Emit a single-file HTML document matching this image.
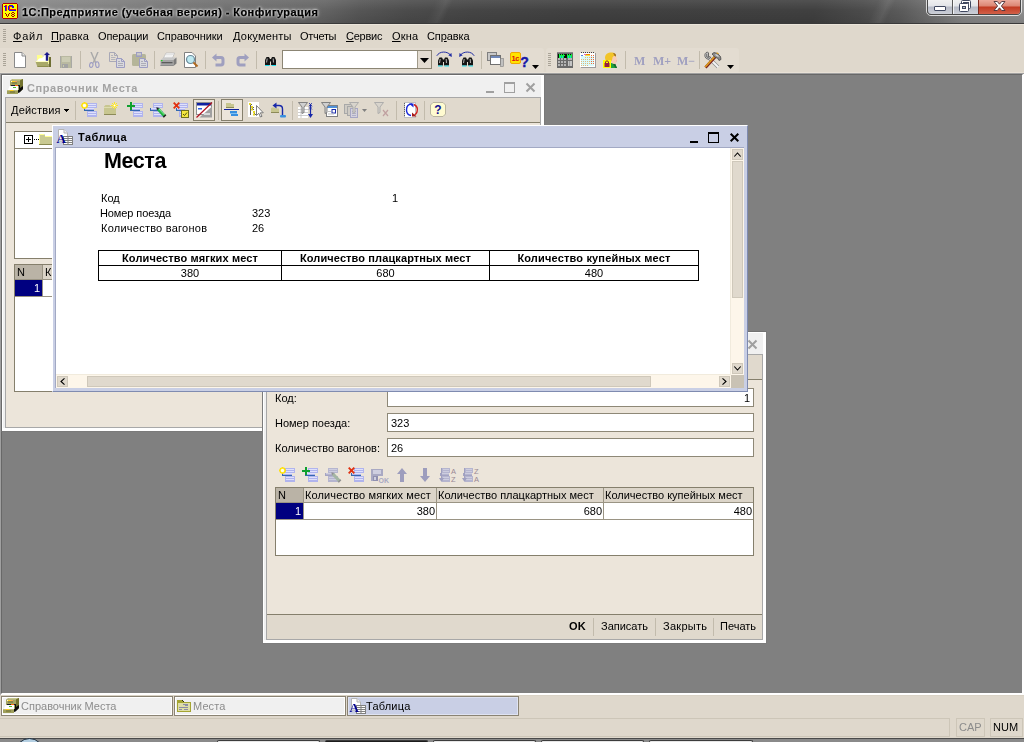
<!DOCTYPE html>
<html lang="ru">
<head>
<meta charset="utf-8">
<title>1C</title>
<style>
*{margin:0;padding:0;box-sizing:border-box;}
html,body{width:1024px;height:742px;overflow:hidden;background:#808080;}
body{font-family:"Liberation Sans",sans-serif;font-size:11px;color:#000;position:relative;}
.a{position:absolute;}
.t{will-change:transform;position:absolute;white-space:nowrap;line-height:13px;height:13px;font-size:11px;}
.b{font-weight:bold;}
u{text-decoration:underline;text-underline-offset:1px;}
svg{position:absolute;overflow:visible;}
/* title bar */
#tb{left:0;top:0;width:1024px;height:24px;
 background:
  linear-gradient(to bottom,rgba(255,255,255,.09) 0,rgba(255,255,255,0) 45%,rgba(0,0,0,.10) 100%),
  linear-gradient(115deg,rgba(255,255,255,0) 796px,rgba(255,255,255,.07) 806px,rgba(255,255,255,0) 812px),
  linear-gradient(115deg,rgba(255,255,255,0) 395px,rgba(255,255,255,.06) 405px,rgba(255,255,255,0) 411px),
  linear-gradient(105deg,#8a8a8a 0,#808080 90px,#727272 190px,#6a6a6a 270px,#646464 315px,#565656 350px,#4c4c4c 395px,#454545 460px,#414141 560px,#404040 790px,#4b4b4b 835px,#5c5c5c 875px,#717171 905px,#868686 935px,#8e8e8e 990px,#888888 1024px);
 border-bottom:1px solid #3a3a3a;}
#tbtxt{left:22px;top:6px;font-size:11px;letter-spacing:.43px;font-weight:bold;line-height:13px;height:13px;color:#000;
 -webkit-text-stroke:.25px #000;text-shadow:0 0 2px #fff,0 0 3px rgba(255,255,255,.85),0 0 5px rgba(255,255,255,.5);}
/* menu + toolbar zone */
#mz{left:0;top:24px;width:1024px;height:49px;background:#dfd8cc;border-top:1px solid #ebe5da;}
.tbar{background:#e3dcd1;border-radius:0 3px 3px 0;}
.grip{width:3px;background:repeating-linear-gradient(to bottom,#a9a397 0,#a9a397 1px,transparent 1px,transparent 2px);}
.vsep{width:1px;background:#c2bbac;}
/* generic window */
.win{position:absolute;}
.sbtn{background:#e0d9cd;border:1px solid #cfc8ba;}
</style>
</head>
<body>
<!-- TITLE BAR -->
<div id="tb" class="a"></div>
<div id="tbtxt" class="t">1С:Предприятие (учебная версия) - Конфигурация</div>

<!-- logo -->
<svg style="left:2px;top:3px" width="16" height="16" viewBox="0 0 16 16" shape-rendering="crispEdges"><rect x="1" y="0" width="14" height="16" fill="#b00000"/><rect x="0" y="1" width="16" height="14" fill="#b00000"/><rect x="1" y="1" width="14" height="14" fill="#ffff00"/><rect x="2" y="3" width="2" height="1" fill="#1010f0"/><rect x="3" y="4" width="1" height="4" fill="#1010f0"/><rect x="7" y="2" width="4" height="1" fill="#1010f0"/><rect x="6" y="3" width="1" height="4" fill="#1010f0"/><rect x="10" y="3" width="2" height="2" fill="#1010f0"/><rect x="7" y="7" width="7" height="1" fill="#1010f0"/><rect x="3" y="2" width="2" height="1" fill="#f01010"/><rect x="4" y="3" width="1" height="5" fill="#f01010"/><rect x="7" y="3" width="3" height="1" fill="#f01010"/><rect x="7" y="4" width="1" height="2" fill="#f01010"/><rect x="7" y="6" width="7" height="1" fill="#f01010"/><rect x="3" y="10" width="1" height="1" fill="#a00000"/><rect x="7" y="10" width="1" height="1" fill="#a00000"/><rect x="4" y="11" width="1" height="1" fill="#a00000"/><rect x="6" y="11" width="1" height="1" fill="#a00000"/><rect x="4" y="12" width="1" height="1" fill="#a00000"/><rect x="6" y="12" width="1" height="1" fill="#a00000"/><rect x="5" y="13" width="1" height="1" fill="#a00000"/><rect x="10" y="9" width="2" height="1" fill="#a00000"/><rect x="9" y="10" width="1" height="1" fill="#a00000"/><rect x="12" y="10" width="1" height="1" fill="#a00000"/><rect x="10" y="11" width="2" height="1" fill="#a00000"/><rect x="9" y="12" width="1" height="1" fill="#a00000"/><rect x="12" y="12" width="1" height="1" fill="#a00000"/><rect x="10" y="13" width="2" height="1" fill="#a00000"/></svg>
<!-- caption buttons -->
<div class="a" style="left:926px;top:-2px;width:96px;height:18px;border:1px solid rgba(255,255,255,.75);border-radius:0 0 5px 5px"></div>
<div class="a" style="left:927px;top:-2px;width:94px;height:17px;border:1px solid #484848;border-radius:0 0 4px 4px;overflow:hidden;background:linear-gradient(to bottom,#f2f2f2 0,#e2e4e8 7px,#b6bac6 8px,#cfd2da 16px)">
 <div class="a" style="left:50px;top:0;width:44px;height:17px;background:linear-gradient(to bottom,#eeb0a2 0,#dc8674 7px,#c23a22 8px,#d4664e 16px);border-left:1px solid #7a2a20"></div>
 <div class="a" style="left:24px;top:0;width:1px;height:17px;background:#585858"></div>
 <div class="a" style="left:25px;top:0;width:1px;height:17px;background:rgba(255,255,255,.7)"></div>
</div>
<div class="a" style="left:934px;top:6px;width:12px;height:5px;background:#fff;border:1px solid #404860;border-radius:1px"></div>
<svg style="left:958px;top:0" width="14" height="12" viewBox="0 0 14 12"><rect x="3.500" y=".5" width="9" height="8" rx="1" fill="#fff" stroke="#404860"/><rect x="5.500" y="2.500" width="5" height="4" fill="#d8dae0" stroke="#404860"/><rect x="1.500" y="3.500" width="9" height="8" rx="1" fill="#fff" stroke="#404860"/><rect x="4.500" y="6.500" width="3" height="2" fill="#c0c4cc" stroke="#404860"/></svg>
<svg style="left:993px;top:1px" width="13" height="10" viewBox="0 0 13 10"><path d="M1 .5H4.300L6.500 3.200L8.700 .5H12L8.400 5L12 9.500H8.700L6.500 6.800L4.300 9.500H1L4.600 5Z" fill="#fff" stroke="#4a3038" stroke-width=".9"/></svg>

<!-- MENU ZONE -->
<div id="mz" class="a"></div>
<div class="a grip" style="left:3px;top:29px;height:13px"></div>
<div class="t" style="left:13px;top:30px;letter-spacing:.8px"><u>Ф</u>айл</div>
<div class="t" style="left:51px;top:30px;letter-spacing:.15px"><u>П</u>равка</div>
<div class="t" style="left:98px;top:30px;letter-spacing:-.14px">Операции</div>
<div class="t" style="left:157px;top:30px;letter-spacing:-.11px">Справочники</div>
<div class="t" style="left:233px;top:30px;letter-spacing:.22px">Док<u>у</u>менты</div>
<div class="t" style="left:300px;top:30px;letter-spacing:-.3px">Отчеты</div>
<div class="t" style="left:346px;top:30px;letter-spacing:-.23px"><u>С</u>ервис</div>
<div class="t" style="left:392px;top:30px;letter-spacing:.15px"><u>О</u>кна</div>
<div class="t" style="left:427px;top:30px;letter-spacing:-.1px">Сп<u>р</u>авка</div>

<!-- MAIN TOOLBAR 1 -->
<div class="a tbar" style="left:0;top:48px;width:544px;height:25px"></div>
<div class="a grip" style="left:3px;top:53px;height:13px"></div>
<!-- new -->
<svg style="left:13px;top:52px" width="14" height="17" viewBox="0 0 14 17"><path d="M1.5 .5H9L12.5 4V15.5H1.5Z" fill="#fff" stroke="#8a8a8a"/><path d="M9 .5V4H12.5" fill="#e8e8e8" stroke="#8a8a8a"/></svg>
<!-- open -->
<svg style="left:35px;top:52px" width="17" height="16" viewBox="0 0 17 16"><path d="M2 3H6.500L8 4.500V9H2Z" fill="#ffff8c"/><path d="M2 9L4 6.500L7 6L10 3.500L12 4V9Z" fill="#fff"/><path d="M13 5H14V12H13Z" fill="#ffffa8"/><path d="M14 5H16V15H13.500V12H14Z" fill="#6e6e32"/><path d="M.3 9H13L13.500 15H2.500Z" fill="#a8a868"/><path d="M.3 9H13V10H.6Z" fill="#ffffc4"/><path d="M2.500 14H13.500V15H2.500Z" fill="#8c8c4c"/><path d="M12 0L15 3H13.200V8.700H10.800V3H9Z" fill="#1a1a8c"/></svg>
<!-- save disabled -->
<svg style="left:60px;top:56px" width="12" height="12" viewBox="0 0 12 12" shape-rendering="crispEdges"><rect x="0" y="0" width="12" height="12" fill="#a9a9a5"/><rect x="1" y="0" width="10" height="12" fill="#b9b9a1"/><rect x="2" y="1" width="8" height="5" fill="#cbcbb3"/><rect x="2" y="8" width="6" height="4" fill="#a3a3a3"/><rect x="3" y="9" width="1" height="2" fill="#cbcbab"/></svg>
<div class="a vsep" style="left:80px;top:51px;height:18px"></div>
<!-- cut -->
<svg style="left:89px;top:52px" width="11" height="16" viewBox="0 0 11 16"><path d="M1.300 0L2.800 0L7.300 10.500L6 11Z" fill="#a9a9a9"/><path d="M9.700 0L8.200 0L3.700 10.500L5 11Z" fill="#a9a9a9"/><ellipse cx="2.300" cy="13" rx="1.700" ry="2.400" fill="none" stroke="#9d9dc3" stroke-width="1.100" transform="rotate(12 2.300 13)"/><ellipse cx="8.300" cy="12.600" rx="1.700" ry="2.900" fill="none" stroke="#9d9dc3" stroke-width="1.100" transform="rotate(-8 8.300 12.600)"/></svg>
<!-- copy -->
<svg style="left:109px;top:52px" width="17" height="17" viewBox="0 0 17 17"><path d="M.5 .5H5.500L8.500 3.500V9.500H.5Z" fill="#e3dcd1" stroke="#a9a9b7"/><path d="M5.500 .5V3.500H8.500" fill="none" stroke="#a9a9b7"/><path d="M2 3.500H4M2 5.500H6.500M2 7.500H6.500" stroke="#b4b4bc"/><path d="M7.5 6.5H12.5L15.5 9.5V15.5H7.5Z" fill="#d9d9dd" stroke="#9d9dc3"/><path d="M12.5 6.5V9.5H15.5" fill="none" stroke="#9d9dc3"/><path d="M9 9.5H11M9 11.5H14M9 13.5H14" stroke="#acacb8"/></svg>
<!-- paste -->
<svg style="left:132px;top:52px" width="17" height="17" viewBox="0 0 17 17"><rect x="0" y="2" width="14" height="12" rx="1.500" fill="#b5b599"/><rect x="4.500" y=".5" width="5" height="4" fill="#c9c9c9" stroke="#9d9dc3"/><rect x="5" y="3" width="4" height="1" fill="#b0b0b8"/><path d="M7.5 6.5H12.5L15.5 9.5V15.5H7.5Z" fill="#d9d9dd" stroke="#9d9dc3"/><path d="M12.5 6.5V9.5H15.5" fill="none" stroke="#9d9dc3"/><path d="M9 9.5H11M9 11.5H14M9 13.5H14" stroke="#acacb8"/></svg>
<div class="a vsep" style="left:154px;top:51px;height:18px"></div>
<!-- print -->
<svg style="left:160px;top:52px" width="17" height="16" viewBox="0 0 17 16"><path d="M3.500 6L6 1H14.500L12.500 6Z" fill="#fff" stroke="#b4b4b4" stroke-width=".7"/><path d="M6 2.500H13M5.500 4H12.500" stroke="#d8d8d8" stroke-width=".7"/><path d="M.5 8L3.500 5.500H14L16.500 5.500L13.500 8Z" fill="#c8c8c8"/><path d="M.5 8H13.500V14H.5Z" fill="#a4a4a4"/><path d="M13.500 8L16.500 5.500V11.500L13.500 14Z" fill="#7c7c7c"/><rect x="1.500" y="10" width="11" height="1.300" fill="#5c5c5c"/><rect x=".5" y="13" width="13" height="1" fill="#8c8c8c"/><rect x="1" y="8" width="1.500" height="1.200" fill="#20d020"/></svg>
<!-- preview -->
<svg style="left:184px;top:52px" width="15" height="17" viewBox="0 0 15 17"><path d="M.5 .5H8L11.500 4V15.500H.5Z" fill="#fff" stroke="#808080"/><circle cx="6.500" cy="7.500" r="4" fill="#bfeaf2" stroke="#6a8a9a" stroke-width="1.200"/><path d="M9.500 10.500L13.500 14.500" stroke="#b06a20" stroke-width="2"/></svg>
<div class="a vsep" style="left:205px;top:51px;height:18px"></div>
<!-- undo -->
<svg style="left:212px;top:53px" width="13" height="14" viewBox="0 0 13 14"><path d="M0 4.500L4.500 .5V3H9C11.500 3 12.500 4.500 12.500 6.500V10C12.500 12 11.500 13.500 9 13.500H3.500V10.500H8.500C9.300 10.500 9.500 10 9.500 9.500V7C9.500 6.300 9.200 6 8.500 6H4.500V8.500Z" fill="#9f9fbf"/></svg>
<!-- redo -->
<svg style="left:236px;top:53px" width="13" height="14" viewBox="0 0 13 14"><g transform="translate(13,0) scale(-1,1)"><path d="M0 4.500L4.500 .5V3H9C11.500 3 12.500 4.500 12.500 6.500V10C12.500 12 11.500 13.500 9 13.500H3.500V10.500H8.500C9.300 10.500 9.500 10 9.500 9.500V7C9.500 6.300 9.200 6 8.500 6H4.500V8.500Z" fill="#9f9fbf"/></g></svg>
<div class="a vsep" style="left:256px;top:51px;height:18px"></div>
<!-- binoculars -->
<svg style="left:265px;top:57px" width="11" height="9" viewBox="0 0 11 9"><path d="M1.500 0H4L5 2V8H0V3Z" fill="#151515"/><path d="M9.500 0H7L6 2V8H11V3Z" fill="#151515"/><rect x="4.500" y="2" width="2" height="2.500" fill="#151515"/><path d="M2.200 1.500L1.500 5.500" stroke="#a8a8a8" stroke-width="1.100"/><path d="M8.200 1.500L8.500 5.500" stroke="#a8a8a8" stroke-width="1.100"/><rect x="0" y="8" width="4.500" height="1" fill="#20dcec"/><rect x="6.500" y="8" width="4.500" height="1" fill="#20dcec"/></svg>
<!-- combo -->
<div class="a" style="left:282px;top:50px;width:150px;height:19px;background:#fff;border:1px solid #8b8574"></div>
<div class="a" style="left:417px;top:51px;width:14px;height:17px;background:#e3dcd1;border-left:1px solid #a09a8a"></div>
<svg style="left:420px;top:58px" width="9" height="5" viewBox="0 0 9 5"><path d="M0 0H9L4.500 5Z" fill="#000"/></svg>
<!-- find next -->
<svg style="left:436px;top:51px" width="17" height="16" viewBox="0 0 17 16"><path d="M.8 4.800C3.500 0 11 0 14.300 3.800" fill="none" stroke="#2430a4" stroke-width="1"/><path d="M15.800 6L15.500 2L12.300 4.300Z" fill="#2430a4"/><g transform="translate(2,6.500)"><path d="M1.500 0H4L5 2V8H0V3Z" fill="#151515"/><path d="M9.500 0H7L6 2V8H11V3Z" fill="#151515"/><rect x="4.500" y="2" width="2" height="2.500" fill="#151515"/><path d="M2.200 1.500L1.500 5.500" stroke="#a8a8a8" stroke-width="1.100"/><path d="M8.200 1.500L8.500 5.500" stroke="#a8a8a8" stroke-width="1.100"/><rect x="0" y="8" width="4.500" height="1" fill="#20dcec"/><rect x="6.500" y="8" width="4.500" height="1" fill="#20dcec"/></g></svg>
<!-- find prev -->
<svg style="left:459px;top:51px" width="17" height="16" viewBox="0 0 17 16"><path d="M15.200 4.800C12.500 0 5 0 1.700 3.800" fill="none" stroke="#2430a4" stroke-width="1"/><path d="M.2 6L.5 2L3.700 4.300Z" fill="#2430a4"/><g transform="translate(3,6.500)"><path d="M1.500 0H4L5 2V8H0V3Z" fill="#151515"/><path d="M9.500 0H7L6 2V8H11V3Z" fill="#151515"/><rect x="4.500" y="2" width="2" height="2.500" fill="#151515"/><path d="M2.200 1.500L1.500 5.500" stroke="#a8a8a8" stroke-width="1.100"/><path d="M8.200 1.500L8.500 5.500" stroke="#a8a8a8" stroke-width="1.100"/><rect x="0" y="8" width="4.500" height="1" fill="#20dcec"/><rect x="6.500" y="8" width="4.500" height="1" fill="#20dcec"/></g></svg>
<div class="a vsep" style="left:481px;top:51px;height:18px"></div>
<!-- windows -->
<svg style="left:487px;top:52px" width="17" height="15" viewBox="0 0 17 15"><rect x=".5" y=".5" width="9" height="8" fill="#c8c8c8" stroke="#808080"/><rect x="3.500" y="3.500" width="10" height="9" fill="#fff" stroke="#707070"/><rect x="4" y="4" width="9" height="2" fill="#7088b8"/><rect x="13.500" y="6.500" width="3" height="8" fill="#c0c0c0" stroke="#808080" stroke-width=".6"/></svg>
<!-- 1c help -->
<svg style="left:510px;top:52px" width="18" height="16" viewBox="0 0 18 16"><rect x=".5" y=".5" width="10" height="11" rx="1.500" fill="#ffe400" stroke="#f0a800"/><text x="1.500" y="8.500" font-family="Liberation Sans" font-size="7.500" font-weight="bold" fill="#e01010" letter-spacing="-.3">1c</text><text x="10.300" y="15.300" font-family="Liberation Sans" font-size="14" font-weight="bold" fill="#1818a8" stroke="#1818a8" stroke-width=".4">?</text></svg>
<svg style="left:532px;top:65px" width="7" height="4" viewBox="0 0 7 4"><path d="M0 0H7L3.500 4Z" fill="#000"/></svg>

<!-- MAIN TOOLBAR 2 -->
<div class="a tbar" style="left:546px;top:48px;width:193px;height:25px;border-radius:3px"></div>
<div class="a grip" style="left:548px;top:53px;height:13px"></div>
<!-- calculator -->
<svg style="left:557px;top:52px" width="16" height="16" viewBox="0 0 16 16" shape-rendering="crispEdges"><rect x="0" y="0" width="16" height="16" fill="#6a6a6a"/><rect x="0" y="0" width="16" height="1" fill="#8a8a8a"/><rect x="1" y="2" width="14" height="4" fill="#081008"/><rect x="2" y="2" width="1" height="4" fill="#10f040"/><rect x="4" y="2" width="1" height="4" fill="#10f040"/><rect x="6" y="2" width="1" height="4" fill="#10f040"/><rect x="10" y="2" width="1" height="4" fill="#10f040"/><rect x="12" y="2" width="1" height="4" fill="#10f040"/><rect x="14" y="2" width="1" height="4" fill="#10f040"/><rect x="3" y="4" width="1" height="2" fill="#10d8d0"/><rect x="5" y="4" width="1" height="2" fill="#10d8d0"/><rect x="11" y="4" width="1" height="2" fill="#10d8d0"/><rect x="13" y="4" width="1" height="2" fill="#10d8d0"/><rect x="2" y="3" width="6" height="1" fill="#10f040"/><rect x="10" y="3" width="5" height="1" fill="#10f040"/><rect x="1" y="6" width="2" height="2" fill="#b4b4b4"/><rect x="4" y="6" width="2" height="2" fill="#b4b4b4"/><rect x="7" y="6" width="2" height="2" fill="#b4b4b4"/><rect x="1" y="9" width="2" height="2" fill="#b4b4b4"/><rect x="4" y="9" width="2" height="2" fill="#b4b4b4"/><rect x="7" y="9" width="2" height="2" fill="#b4b4b4"/><rect x="1" y="12" width="2" height="2" fill="#b4b4b4"/><rect x="4" y="12" width="2" height="2" fill="#b4b4b4"/><rect x="7" y="12" width="2" height="2" fill="#b4b4b4"/><rect x="11" y="6" width="4" height="2" fill="#b4b4b4"/><rect x="11" y="9" width="4" height="5" fill="#c4c4c4"/><rect x="12" y="9" width="1" height="5" fill="#a0a0a0"/></svg>
<!-- calendar -->
<svg style="left:580px;top:52px" width="16" height="16" viewBox="0 0 16 16" shape-rendering="crispEdges"><rect x="1" y="1" width="15" height="15" fill="#9c9c9c"/><rect x="0" y="1" width="15" height="14" fill="#fff"/><rect x="1" y="4" width="13" height="10" fill="#dafafa"/><rect x="0" y="0" width="15" height="1" fill="#e3dcd1"/><rect x="1" y="0" width="1" height="1" fill="#404040"/><rect x="3" y="0" width="1" height="1" fill="#404040"/><rect x="5" y="0" width="1" height="1" fill="#404040"/><rect x="7" y="0" width="1" height="1" fill="#404040"/><rect x="9" y="0" width="1" height="1" fill="#404040"/><rect x="11" y="0" width="1" height="1" fill="#404040"/><rect x="13" y="0" width="1" height="1" fill="#404040"/><rect x="4" y="2" width="2" height="1" fill="#e060c0"/><rect x="6" y="2" width="4" height="1" fill="#f08000"/><rect x="5" y="3" width="5" height="1" fill="#f8e040"/><rect x="1" y="3" width="2" height="1" fill="#6080e0"/><rect x="11" y="3" width="1" height="1" fill="#f06a38"/><rect x="13" y="3" width="1" height="1" fill="#f06a38"/><rect x="5" y="5" width="1" height="1" fill="#e0b878"/><rect x="7" y="5" width="1" height="1" fill="#e0b878"/><rect x="9" y="5" width="1" height="1" fill="#e0b878"/><rect x="11" y="5" width="1" height="1" fill="#f06a38"/><rect x="13" y="5" width="1" height="1" fill="#f06a38"/><rect x="1" y="7" width="1" height="1" fill="#e0b878"/><rect x="3" y="7" width="1" height="1" fill="#e0b878"/><rect x="5" y="7" width="1" height="1" fill="#e0b878"/><rect x="7" y="7" width="1" height="1" fill="#e0b878"/><rect x="9" y="7" width="1" height="1" fill="#e0b878"/><rect x="11" y="7" width="1" height="1" fill="#f06a38"/><rect x="13" y="7" width="1" height="1" fill="#f06a38"/><rect x="1" y="9" width="1" height="1" fill="#e0b878"/><rect x="3" y="9" width="1" height="1" fill="#e0b878"/><rect x="5" y="9" width="1" height="1" fill="#e0b878"/><rect x="7" y="9" width="1" height="1" fill="#e0b878"/><rect x="9" y="9" width="1" height="1" fill="#e0b878"/><rect x="11" y="9" width="1" height="1" fill="#f06a38"/><rect x="13" y="9" width="1" height="1" fill="#f06a38"/><rect x="1" y="11" width="1" height="1" fill="#e0b878"/><rect x="3" y="11" width="1" height="1" fill="#e0b878"/><rect x="5" y="11" width="1" height="1" fill="#e0b878"/><rect x="7" y="11" width="1" height="1" fill="#e0b878"/><rect x="9" y="11" width="1" height="1" fill="#e0b878"/><rect x="11" y="11" width="1" height="1" fill="#f06a38"/><rect x="13" y="11" width="1" height="1" fill="#f06a38"/><rect x="1" y="13" width="1" height="1" fill="#e0b878"/><rect x="3" y="13" width="1" height="1" fill="#e0b878"/><rect x="5" y="13" width="1" height="1" fill="#e0b878"/><rect x="7" y="13" width="1" height="1" fill="#e0b878"/></svg>
<!-- user lock -->
<svg style="left:602px;top:52px" width="16" height="17" viewBox="0 0 16 17"><path d="M9 11L8 16H15L13 11.500Z" fill="#20a040"/><path d="M11 12L13.500 16H15L13 11.500Z" fill="#186830"/><path d="M8 4C10 2 14 3 14.500 5.500L15 8.500L14 9L14 11.500C12 12.500 10 11.500 9 10Z" fill="#f8ccb4"/><path d="M14 8.500L15 8.500L14.300 10.500Z" fill="#f0a0a0"/><path d="M3 6C3 1.500 7 0 10.500 .5C13 1 14.500 2.500 14 4.500C12.500 3.500 11 4 10.500 5.500C10.500 8 9 10 8 10.500L4 10Z" fill="#f2c428"/><path d="M11 1C13 1 14.500 2.500 14 4.500L12.500 3.800Z" fill="#a07028"/><rect x="1" y="8" width="8" height="8" fill="#ffff00"/><rect x="2.500" y="11" width="5" height="4" fill="#962040"/><path d="M3.500 11V10C3.500 8.600 6.500 8.600 6.500 10V11" fill="none" stroke="#962040" stroke-width="1"/></svg>
<div class="a vsep" style="left:625px;top:51px;height:18px"></div>
<div class="t b" style="left:634px;top:55px;font-family:'Liberation Serif',serif;font-size:12px;color:#9f9fc0">М</div>
<div class="t b" style="left:653px;top:55px;font-family:'Liberation Serif',serif;font-size:12px;color:#9f9fc0">М+</div>
<div class="t b" style="left:677px;top:55px;font-family:'Liberation Serif',serif;font-size:12px;color:#9f9fc0">М−</div>
<div class="a vsep" style="left:699px;top:51px;height:18px"></div>
<!-- tools -->
<svg style="left:704px;top:52px" width="18" height="17" viewBox="0 0 18 17"><path d="M5 6L14 15" stroke="#8c8c8c" stroke-width="3.400"/><path d="M5 6L14.300 15.300" stroke="#f4f4f4" stroke-width="2"/><path d="M3.500 0C1.500 .5 .5 2 1 4.500C1.500 6.500 3.500 7.500 5.500 7L6.500 5L4.500 4.500V1Z" fill="#d4d4d4" stroke="#484848" stroke-width=".8"/><path d="M2.800 1.500V5.200H5" fill="none" stroke="#505050" stroke-width=".9"/><path d="M1.500 15.500L11.500 4.500" stroke="#7a2020" stroke-width="2.800"/><path d="M1.200 15L11.200 4" stroke="#dc9a1c" stroke-width="1.800"/><path d="M8 2L10 .5L13.500 1.500L16.500 4.500L17 7.500L15 8.500L13.500 6L11 5.500L9.500 3.500Z" fill="#8a8a8a" stroke="#3c3c3c" stroke-width=".7"/><path d="M11.500 2.500L14.500 4.500" stroke="#dcdcdc" stroke-width="1.200"/><path d="M12.500 0.800L14.500 1.800" stroke="#dc9a1c" stroke-width="1.200"/></svg>
<svg style="left:727px;top:65px" width="7" height="4" viewBox="0 0 7 4"><path d="M0 0H7L3.500 4Z" fill="#000"/></svg>

<!-- MDI client edge -->
<div class="a" style="left:0;top:73px;width:1024px;height:622px;background:#808080;border:2px solid #fff;border-top-color:#686868;border-left-color:#686868"></div>
<div class="a" style="left:0;top:73px;width:1024px;height:1px;background:#a0a0a0"></div>
<div class="a" style="left:0;top:73px;width:1px;height:621px;background:#a0a0a0"></div>
<div class="a" style="left:0;top:72px;width:1024px;height:1px;background:#e8e1d6"></div>

<!-- WINDOWS placeholder -->
<!--W1 Справочник Места : outer x1..544 y74..431-->
<div class="a" style="left:1px;top:74px;width:544px;height:358px;background:#f0f0f0;border:1px solid #6a6a6a;border-right-color:#7a7a7a;border-bottom-color:#7a7a7a"></div>
<div class="a" style="left:2px;top:75px;width:542px;height:356px;border:1px solid #fff;border-right-width:3px;border-bottom-width:3px"></div>
<!-- title -->
<div class="t b" style="left:27px;top:82px;letter-spacing:.59px;color:#a3a3a3">Справочник Места</div>
<div class="a" style="left:486px;top:91px;width:8px;height:2px;background:#a0a0a0"></div>
<div class="a" style="left:504px;top:82px;width:11px;height:11px;border:1px solid #a0a0a0;border-top-width:2px"></div>
<svg style="left:526px;top:83px" width="9" height="9" viewBox="0 0 9 9"><path d="M.5 .5L8.500 8.500M8.500 .5L.5 8.500" stroke="#a0a0a0" stroke-width="2"/></svg>
<svg style="left:7px;top:78px" width="17" height="17" viewBox="0 0 17 17"><path d="M3 2.500L6 1H16V11L13 13.500V2.500Z" fill="#8c8c48"/><path d="M3 2.500L6 1H16L13 2.500Z" fill="#c6c68c"/><rect x="3" y="2.500" width="10" height="10" fill="#a4a462"/><path d="M13 2.500L16 1V11L13 13.500Z" fill="#72722e"/><rect x="4" y="3" width="6" height="1" fill="#ffd020"/><rect x="4" y="3" width="1" height="1" fill="#fffbd0"/><rect x="8" y="3" width="2" height="1" fill="#f0a060"/><rect x="5" y="4.500" width="5" height="1" fill="#6c6c30"/><rect x="4" y="7" width="9" height="1" fill="#181828"/><rect x="8" y="7" width="3" height="1" fill="#ff6a00"/><path d="M12 8H13V10L16 8V11L12.500 14.500L11 15V12H12Z" fill="#0c0c0c"/><path d="M2.500 8H11V12H1Z" fill="#fff"/><rect x="6" y="9" width="3" height="1" fill="#50c030"/><rect x="0" y="12" width="11" height="4" fill="#a0a05c"/><rect x="0" y="12" width="11" height="1" fill="#bcbc80"/><rect x="2.500" y="12" width="4" height="1" fill="#ffd020"/><rect x="3" y="13.500" width="5" height="1" fill="#6c6c30"/></svg>
<!-- content -->
<div class="a" style="left:5px;top:97px;width:536px;height:331px;background:#ece5da;border:1px solid #a8a8a8"></div>
<!-- cmd bar -->
<div class="a" style="left:6px;top:98px;width:534px;height:25px;background:#e0d9cd;border-bottom:1px solid #857f6c"></div>
<div class="t" style="left:11px;top:104px;letter-spacing:.18px">Действия</div>
<svg style="left:64px;top:109px" width="5" height="3" viewBox="0 0 5 3" shape-rendering="crispEdges"><rect x="0" y="0" width="5" height="1"/><rect x="1" y="1" width="3" height="1"/><rect x="2" y="2" width="1" height="1"/></svg>
<div class="a vsep" style="left:75px;top:101px;height:19px"></div>
<svg style="left:81px;top:102px" width="17" height="16" viewBox="0 0 17 16" shape-rendering="crispEdges"><rect x="6" y="1" width="10" height="5" fill="#b0b4ee"/><rect x="7" y="2" width="8" height="1" fill="#dfe1fb"/><rect x="7" y="4" width="8" height="1" fill="#dfe1fb"/><rect x="3" y="6" width="10" height="3" fill="#b0b4ee"/><rect x="4" y="6" width="9" height="1" fill="#dfe1fb"/><rect x="3" y="8" width="10" height="1" fill="#3468b0"/><rect x="3" y="6" width="1" height="3" fill="#3468b0"/><rect x="6" y="9" width="10" height="6" fill="#b0b4ee"/><rect x="7" y="10" width="8" height="1" fill="#dfe1fb"/><rect x="7" y="12" width="8" height="1" fill="#dfe1fb"/><g shape-rendering="auto"><circle cx="3.500" cy="3.500" r="2.600" fill="#fffbd0" stroke="#ffe000" stroke-width="1.400"/><path d="M3.500 0V7M0 3.500H7M1 1L6 6M6 1L1 6" stroke="#ffe000" stroke-width=".8"/><circle cx="3.500" cy="3.500" r="1.700" fill="#fffef0"/></g></svg>
<svg style="left:104px;top:102px" width="16" height="14" viewBox="0 0 16 14"><path d="M0 4.500L1.500 3H5.500L7 4.500H12V13H0Z" fill="#c8c690"/><path d="M0 12.500H12" stroke="#8c8a58"/><path d="M0 5.500H12" stroke="#deddb0"/><path d="M10.500 0V7M7 3.500H14M8 1L13 6M13 1L8 6" stroke="#ffe820" stroke-width="1"/><circle cx="10.500" cy="3.500" r="1" fill="#fff"/></svg>
<svg style="left:127px;top:102px" width="17" height="16" viewBox="0 0 17 16" shape-rendering="crispEdges"><rect x="6" y="1" width="10" height="5" fill="#b0b4ee"/><rect x="7" y="2" width="8" height="1" fill="#dfe1fb"/><rect x="7" y="4" width="8" height="1" fill="#dfe1fb"/><rect x="3" y="6" width="10" height="3" fill="#b0b4ee"/><rect x="4" y="6" width="9" height="1" fill="#dfe1fb"/><rect x="3" y="8" width="10" height="1" fill="#3468b0"/><rect x="3" y="6" width="1" height="3" fill="#3468b0"/><rect x="6" y="9" width="10" height="6" fill="#b0b4ee"/><rect x="7" y="10" width="8" height="1" fill="#dfe1fb"/><rect x="7" y="12" width="8" height="1" fill="#dfe1fb"/><rect x="0" y="3" width="8" height="2" fill="#10a030"/><rect x="3" y="0" width="2" height="8" fill="#10a030"/></svg>
<svg style="left:150px;top:102px" width="17" height="16" viewBox="0 0 17 16"><g shape-rendering="crispEdges"><rect x="3" y="1" width="10" height="5" fill="#b0b4ee"/><rect x="4" y="2" width="8" height="1" fill="#dfe1fb"/><rect x="4" y="4" width="8" height="1" fill="#dfe1fb"/><rect x="0" y="6" width="10" height="3" fill="#b0b4ee"/><rect x="1" y="6" width="9" height="1" fill="#dfe1fb"/><rect x="0" y="8" width="10" height="1" fill="#3468b0"/><rect x="0" y="6" width="1" height="3" fill="#3468b0"/><rect x="3" y="9" width="10" height="6" fill="#b0b4ee"/><rect x="4" y="10" width="8" height="1" fill="#dfe1fb"/><rect x="4" y="12" width="8" height="1" fill="#dfe1fb"/></g><path d="M8 7L14.500 14" stroke="#20b040" stroke-width="3.200"/><path d="M8.500 6.500L15 13.500" stroke="#80f090" stroke-width="1"/><path d="M6.300 5.300L9.300 6L7 8.300Z" fill="#202020"/><path d="M13.300 15.300L15.800 12.800" stroke="#202020" stroke-width="1.600"/></svg>
<svg style="left:173px;top:102px" width="17" height="16" viewBox="0 0 17 16"><g shape-rendering="crispEdges"><rect x="6" y="1" width="9" height="5" fill="#b0b4ee"/><rect x="7" y="2" width="7" height="1" fill="#dfe1fb"/><rect x="7" y="4" width="7" height="1" fill="#dfe1fb"/><rect x="3" y="6" width="9" height="3" fill="#b0b4ee"/><rect x="4" y="6" width="8" height="1" fill="#dfe1fb"/><rect x="3" y="8" width="9" height="1" fill="#3468b0"/><rect x="3" y="6" width="1" height="3" fill="#3468b0"/><rect x="6" y="9" width="4" height="6" fill="#b0b4ee"/><rect x="7" y="10" width="2" height="1" fill="#dfe1fb"/><rect x="7" y="12" width="2" height="1" fill="#dfe1fb"/></g><path d="M.7 .7L6.300 6.300M6.300 .7L.7 6.300" stroke="#e03010" stroke-width="1.900"/><rect x="8.500" y="8.500" width="7" height="7" fill="#f4e840" stroke="#707020"/><path d="M10 12L11.500 13.500L14 10.500" fill="none" stroke="#505010" stroke-width="1"/></svg>
<div class="a" style="left:193px;top:99px;width:22px;height:22px;background:#ece5da;border:1px solid #857f6c"></div>
<svg style="left:196px;top:102px" width="17" height="16" viewBox="0 0 17 16"><rect x=".5" y=".5" width="15" height="12" fill="#fff" stroke="#909090"/><rect x="1" y="1" width="14" height="2.500" fill="#1020a0"/><rect x="2" y="6" width="4" height="1.500" fill="#3060e0"/><path d="M16 4.500V15.500H3.500Z" fill="#a0a0a0"/><rect x="8" y="11" width="6" height="2" fill="#d8d8d8"/><path d="M.5 15.500L16 .5" stroke="#b01020" stroke-width="1.200"/></svg>
<div class="a vsep" style="left:218px;top:101px;height:19px"></div>
<div class="a" style="left:221px;top:99px;width:22px;height:22px;background:#ece5da;border:1px solid #857f6c"></div>
<svg style="left:224px;top:102px" width="16" height="16" viewBox="0 0 16 16" shape-rendering="crispEdges"><path d="M2 1.500L3 .5H6L7 1.500H10V6H2Z" fill="#c8c690"/><rect x="2" y="5" width="8" height="1" fill="#8c8a58"/><rect x="0" y="7" width="15" height="1" fill="#10209c"/><rect x="6" y="9" width="7" height="2" fill="#3890e0" rx="1"/><rect x="7" y="12" width="7" height="2" fill="#3890e0"/><rect x="6" y="11" width="7" height="1" fill="#80c0f0"/></svg>
<svg style="left:248px;top:102px" width="16" height="16" viewBox="0 0 16 16"><rect x="0" y="0" width="11" height="15" fill="#fff"/><path d="M2.500 1V13M2.500 2.500H4M4.500 4V8M4.500 5.500H6M4.500 7.500H6M6.500 9V13M6.500 12.500H8" stroke="#606060" stroke-width="1" fill="none"/><g fill="#e8d820"><rect x="1" y="1" width="2" height="2"/><rect x="3" y="4" width="2" height="2"/><rect x="3" y="6.500" width="2" height="2"/><rect x="5" y="9" width="2" height="2"/><rect x="5" y="11.500" width="2" height="2"/></g><path d="M8.500 3.500V13.500L10.800 11.300L12.500 15L14 14.300L12.300 10.800H15.300Z" fill="#fff" stroke="#707070" stroke-width=".9"/></svg>
<svg style="left:270px;top:101px" width="17" height="17" viewBox="0 0 17 17"><path d="M1 7.500L2 6.500H5L6 7.500H9V12H1Z" fill="#c8c690"/><path d="M1 11.500H9" stroke="#8c8a58"/><path d="M5 4.500H9C11.500 4.500 12.500 6 12.500 8V14" fill="none" stroke="#1828a8" stroke-width="1.400"/><path d="M2.500 4.500L6.500 1.500V7.500Z" fill="#1828a8"/><rect x="10" y="14" width="6" height="2.500" rx="1" fill="#3890e0"/></svg>
<div class="a vsep" style="left:292px;top:101px;height:19px"></div>
<svg style="left:298px;top:102px" width="16" height="17" viewBox="0 0 16 17"><rect x="0" y="5" width="10" height="11" fill="#fff"/><path d="M0 7.500H10M0 10.500H10M0 13.500H10M3 5V16" stroke="#c0c0c0" stroke-width=".8"/><g transform="translate(.5,.5)"><path d="M0 0H9L5.500 4.500V10L3.500 11V4.500Z" fill="#d0d0d0" stroke="#787878" stroke-width=".9"/></g><path d="M12.500 2V14" stroke="#1828a8" stroke-width="1.200"/><path d="M10 12L12.500 16L15 12Z" fill="#1828a8"/><path d="M11 1L14 4M14 1L11 4M11 4.500L14 7.500M14 4.500L11 7.500" stroke="#1828a8" stroke-width=".8"/></svg>
<svg style="left:321px;top:102px" width="17" height="16" viewBox="0 0 17 16"><rect x="5.500" y="3.500" width="11" height="11" fill="#fff" stroke="#808080"/><rect x="6" y="4" width="10" height="2" fill="#5090d8"/><rect x="11" y="7.500" width="3.500" height="3.500" fill="#fff" stroke="#1828a8"/><path d="M7 9.500H10M7 12H13" stroke="#c0c0c0"/><g transform="translate(.5,.5)"><path d="M0 0H9L5.500 4.500V10L3.500 11V4.500Z" fill="#d0d0d0" stroke="#787878" stroke-width=".9"/></g></svg>
<svg style="left:344px;top:102px" width="17" height="16" viewBox="0 0 17 16"><rect x=".5" y="2.500" width="7" height="9" fill="#cfcbc4" stroke="#a8a8a8"/><rect x="3.500" y="4.500" width="7" height="9" fill="#cfcbc4" stroke="#a8a8a8"/><rect x="6.500" y="6.500" width="7" height="9" fill="#d4d2dc" stroke="#a6a6c4"/><path d="M8 9.500H12M8 11.500H12M8 13.500H12" stroke="#a6a6c4" stroke-width=".8"/><g transform="translate(5.500,.5)"><path d="M0 0H9L5.500 4.500V10L3.500 11V4.500Z" fill="#d8d4cc" stroke="#a8a8a8" stroke-width=".9"/></g></svg>
<svg style="left:362px;top:109px" width="5" height="3" viewBox="0 0 5 3"><path d="M0 0H5L2.500 3Z" fill="#808080"/></svg>
<svg style="left:374px;top:102px" width="16" height="16" viewBox="0 0 16 16"><g transform="translate(.5,.5)"><path d="M0 0H9L5.500 4.500V10L3.500 11V4.500Z" fill="#d8d4cc" stroke="#a8a8a8" stroke-width=".9"/></g><path d="M9 8L14 14M14 8L9 14" stroke="#c0a0a0" stroke-width="1.200"/></svg>
<div class="a vsep" style="left:396px;top:101px;height:19px"></div>
<svg style="left:403px;top:102px" width="16" height="16" viewBox="0 0 16 16"><rect x="1.500" y=".5" width="11" height="15" fill="#fff" stroke="#c0c0c0"/><path d="M1.500 1V15" stroke="#606060" stroke-dasharray="1 1"/><path d="M9 2C5 2 3.500 5 3.500 8C3.500 10.500 5 13 8 13.500" fill="none" stroke="#1828d8" stroke-width="1.400"/><path d="M6 1.500H10.500V5.500Z" fill="#1828d8"/><path d="M11 2.500C14 4 15 7 14 10C13.500 11.500 12.500 12.500 11.500 13" fill="none" stroke="#d02020" stroke-width="1.400"/><path d="M13.500 14.500H9V10.500Z" fill="#a01818"/></svg>
<div class="a vsep" style="left:424px;top:101px;height:19px"></div>
<svg style="left:430px;top:102px" width="16" height="15" viewBox="0 0 16 15"><path d="M3 .5H13L15.500 3V12L13 14.500H3L.5 12V3Z" fill="#fffbd0" stroke="#b8b4a0"/><text x="8" y="12" text-anchor="middle" font-family="Liberation Sans" font-weight="bold" font-size="12" fill="#101090">?</text></svg>
<!-- tree box -->
<div class="a" style="left:14px;top:131px;width:520px;height:128px;background:#fff;border:1px solid #857f6c"></div>
<div class="a" style="left:15px;top:148px;width:518px;height:1px;background:#8b8574"></div>
<div class="a" style="left:24px;top:135px;width:9px;height:9px;background:#fff;border:1px solid #000"></div>
<div class="a" style="left:26px;top:139px;width:5px;height:1px;background:#000"></div>
<div class="a" style="left:28px;top:137px;width:1px;height:5px;background:#000"></div>
<div class="a" style="left:34px;top:139px;width:5px;height:1px;background:repeating-linear-gradient(to right,#000 0,#000 1px,transparent 1px,transparent 2px)"></div>
<svg style="left:39px;top:134px" width="16" height="11" viewBox="0 0 16 11" shape-rendering="crispEdges"><path d="M0 1L1 0H5L6 1V2H16V11H0Z" fill="#c9c992" shape-rendering="auto"/><rect x="0" y="1" width="1" height="9" fill="#ffff94"/><rect x="1" y="0" width="4" height="1" fill="#ffff94"/><rect x="6" y="2" width="10" height="1" fill="#ffff94"/><rect x="0" y="10" width="16" height="1" fill="#8a8a50"/></svg>
<!-- table -->
<div class="a" style="left:14px;top:264px;width:520px;height:128px;background:#fff;border:1px solid #857f6c"></div>
<div class="a" style="left:15px;top:265px;width:28px;height:15px;background:#bab3a6;border-right:1px solid #9a9484;border-bottom:1px solid #9a9484"></div>
<div class="a" style="left:43px;top:265px;width:100px;height:15px;background:#dcd5c9;border-bottom:1px solid #9a9484"></div>
<div class="t" style="left:17px;top:266px">N</div>
<div class="t" style="left:45px;top:266px">Код</div>
<div class="a" style="left:15px;top:280px;width:27px;height:16px;background:#000080"></div>
<div class="a" style="left:42px;top:280px;width:1px;height:17px;background:#9a9484"></div>
<div class="a" style="left:15px;top:296px;width:518px;height:1px;background:#9a9484"></div>
<div class="t" style="left:15px;top:282px;width:25px;text-align:right;color:#fff">1</div>
<!--W2 Места form : outer x263..766 y332..642-->
<div class="a" style="left:262px;top:331px;width:505px;height:313px;background:#f0f0f0;border:1px solid #7c7c7c;border-top-color:#727272"></div>
<div class="a" style="left:263px;top:332px;width:503px;height:311px;border:1px solid #fff;border-right-width:3px;border-bottom-width:3px"></div>
<svg style="left:748px;top:340px" width="9" height="9" viewBox="0 0 9 9"><path d="M.5 .5L8.500 8.500M8.500 .5L.5 8.500" stroke="#a0a0a0" stroke-width="2"/></svg>
<div class="a" style="left:266px;top:354px;width:497px;height:286px;background:#ece5da;border:1px solid #a8a8a8"></div>
<div class="a" style="left:267px;top:355px;width:495px;height:25px;background:#e0d9cd;border-bottom:1px solid #857f6c"></div>
<!-- labels -->
<div class="t" style="left:275px;top:392px">Код:</div>
<div class="t" style="left:275px;top:417px">Номер поезда:</div>
<div class="t" style="left:275px;top:442px">Количество вагонов:</div>
<!-- fields -->
<div class="a" style="left:387px;top:388px;width:367px;height:19px;background:#fff;border:1px solid #8e8877"></div>
<div class="a" style="left:387px;top:413px;width:367px;height:19px;background:#fff;border:1px solid #8e8877"></div>
<div class="a" style="left:387px;top:438px;width:367px;height:19px;background:#fff;border:1px solid #8e8877"></div>
<div class="t" style="left:700px;top:392px;width:50px;text-align:right">1</div>
<div class="t" style="left:391px;top:417px">323</div>
<div class="t" style="left:391px;top:442px">26</div>
<svg style="left:279px;top:467px" width="17" height="16" viewBox="0 0 17 16" shape-rendering="crispEdges"><rect x="6" y="1" width="10" height="5" fill="#b0b4ee"/><rect x="7" y="2" width="8" height="1" fill="#dfe1fb"/><rect x="7" y="4" width="8" height="1" fill="#dfe1fb"/><rect x="3" y="6" width="10" height="3" fill="#b0b4ee"/><rect x="4" y="6" width="9" height="1" fill="#dfe1fb"/><rect x="3" y="8" width="10" height="1" fill="#3468b0"/><rect x="3" y="6" width="1" height="3" fill="#3468b0"/><rect x="6" y="9" width="10" height="6" fill="#b0b4ee"/><rect x="7" y="10" width="8" height="1" fill="#dfe1fb"/><rect x="7" y="12" width="8" height="1" fill="#dfe1fb"/><g shape-rendering="auto"><circle cx="3.500" cy="3.500" r="2.600" fill="#fffbd0" stroke="#ffe000" stroke-width="1.400"/><path d="M3.500 0V7M0 3.500H7M1 1L6 6M6 1L1 6" stroke="#ffe000" stroke-width=".8"/><circle cx="3.500" cy="3.500" r="1.700" fill="#fffef0"/></g></svg>
<svg style="left:302px;top:467px" width="17" height="16" viewBox="0 0 17 16" shape-rendering="crispEdges"><rect x="6" y="1" width="10" height="5" fill="#b0b4ee"/><rect x="7" y="2" width="8" height="1" fill="#dfe1fb"/><rect x="7" y="4" width="8" height="1" fill="#dfe1fb"/><rect x="3" y="6" width="10" height="3" fill="#b0b4ee"/><rect x="4" y="6" width="9" height="1" fill="#dfe1fb"/><rect x="3" y="8" width="10" height="1" fill="#3468b0"/><rect x="3" y="6" width="1" height="3" fill="#3468b0"/><rect x="6" y="9" width="10" height="6" fill="#b0b4ee"/><rect x="7" y="10" width="8" height="1" fill="#dfe1fb"/><rect x="7" y="12" width="8" height="1" fill="#dfe1fb"/><rect x="0" y="3" width="8" height="2" fill="#10a030"/><rect x="3" y="0" width="2" height="8" fill="#10a030"/></svg>
<svg style="left:325px;top:467px" width="17" height="16" viewBox="0 0 17 16"><g shape-rendering="crispEdges"><rect x="3" y="1" width="10" height="5" fill="#b5b5cf"/><rect x="4" y="2" width="8" height="1" fill="#cdcddf"/><rect x="4" y="4" width="8" height="1" fill="#cdcddf"/><rect x="0" y="6" width="10" height="3" fill="#b5b5cf"/><rect x="1" y="6" width="9" height="1" fill="#cdcddf"/><rect x="0" y="8" width="10" height="1" fill="#a4a4c2"/><rect x="0" y="6" width="1" height="3" fill="#a4a4c2"/><rect x="3" y="9" width="10" height="6" fill="#b5b5cf"/><rect x="4" y="10" width="8" height="1" fill="#cdcddf"/><rect x="4" y="12" width="8" height="1" fill="#cdcddf"/></g><path d="M8 7L14.500 14" stroke="#a4b6a4" stroke-width="3.200"/><path d="M6.300 5.300L9.300 6L7 8.300Z" fill="#909090"/><path d="M13.300 15.300L15.800 12.800" stroke="#909090" stroke-width="1.600"/></svg>
<svg style="left:348px;top:467px" width="17" height="16" viewBox="0 0 17 16"><g shape-rendering="crispEdges"><rect x="6" y="1" width="10" height="5" fill="#b0b4ee"/><rect x="7" y="2" width="8" height="1" fill="#dfe1fb"/><rect x="7" y="4" width="8" height="1" fill="#dfe1fb"/><rect x="3" y="6" width="10" height="3" fill="#b0b4ee"/><rect x="4" y="6" width="9" height="1" fill="#dfe1fb"/><rect x="3" y="8" width="10" height="1" fill="#3468b0"/><rect x="3" y="6" width="1" height="3" fill="#3468b0"/><rect x="6" y="9" width="10" height="6" fill="#b0b4ee"/><rect x="7" y="10" width="8" height="1" fill="#dfe1fb"/><rect x="7" y="12" width="8" height="1" fill="#dfe1fb"/></g><path d="M.7 .7L6.300 6.300M6.300 .7L.7 6.300" stroke="#e03010" stroke-width="1.900"/></svg>
<svg style="left:371px;top:469px" width="17" height="14" viewBox="0 0 17 14" shape-rendering="crispEdges"><rect x="0" y="0" width="12" height="12" fill="#a9a9c3"/><rect x="2" y="1" width="8" height="4" fill="#cfcfe0"/><rect x="2" y="7" width="7" height="5" fill="#9090b0"/><rect x="3" y="8" width="2" height="3" fill="#cfcfe0"/><rect x="7" y="7" width="10" height="7" fill="#ece5da"/><text x="7.500" y="13.500" font-family="Liberation Sans" font-weight="bold" font-size="7" fill="#a9a9c3" shape-rendering="auto">OK</text></svg>
<svg style="left:397px;top:468px" width="10" height="14" viewBox="0 0 10 14"><path d="M5 0L10 6H7V14H3V6H0Z" fill="#9d9dbd"/></svg>
<svg style="left:420px;top:468px" width="10" height="14" viewBox="0 0 10 14"><path d="M5 14L10 8H7V0H3V8H0Z" fill="#9d9dbd"/></svg>
<svg style="left:439px;top:467px" width="18" height="16" viewBox="0 0 18 16"><g shape-rendering="crispEdges"><rect x="3" y="1" width="8" height="5" fill="#b5b5cf"/><rect x="4" y="2" width="6" height="1" fill="#cdcddf"/><rect x="4" y="4" width="6" height="1" fill="#cdcddf"/><rect x="1" y="6" width="9" height="3" fill="#b5b5cf"/><rect x="2" y="6" width="8" height="1" fill="#cdcddf"/><rect x="1" y="8" width="9" height="1" fill="#a4a4c2"/><rect x="1" y="6" width="1" height="3" fill="#a4a4c2"/><rect x="3" y="9" width="8" height="6" fill="#b5b5cf"/><rect x="4" y="10" width="6" height="1" fill="#cdcddf"/><rect x="4" y="12" width="6" height="1" fill="#cdcddf"/><rect x="2" y="1" width="1" height="12" fill="#a0a0c0"/></g><path d="M0 11L2.500 15L5 11Z" fill="#a0a0c0"/><text x="12" y="7" font-family="Liberation Sans" font-size="7.500" fill="#9a8a94">A</text><text x="12" y="15" font-family="Liberation Sans" font-size="7.500" fill="#9a8a94">Z</text></svg>
<svg style="left:462px;top:467px" width="18" height="16" viewBox="0 0 18 16"><g shape-rendering="crispEdges"><rect x="3" y="1" width="8" height="5" fill="#b5b5cf"/><rect x="4" y="2" width="6" height="1" fill="#cdcddf"/><rect x="4" y="4" width="6" height="1" fill="#cdcddf"/><rect x="1" y="6" width="9" height="3" fill="#b5b5cf"/><rect x="2" y="6" width="8" height="1" fill="#cdcddf"/><rect x="1" y="8" width="9" height="1" fill="#a4a4c2"/><rect x="1" y="6" width="1" height="3" fill="#a4a4c2"/><rect x="3" y="9" width="8" height="6" fill="#b5b5cf"/><rect x="4" y="10" width="6" height="1" fill="#cdcddf"/><rect x="4" y="12" width="6" height="1" fill="#cdcddf"/><rect x="2" y="1" width="1" height="12" fill="#a0a0c0"/></g><path d="M0 11L2.500 15L5 11Z" fill="#a0a0c0"/><text x="12" y="7" font-family="Liberation Sans" font-size="7.500" fill="#9a8a94">Z</text><text x="12" y="15" font-family="Liberation Sans" font-size="7.500" fill="#9a8a94">A</text></svg>
<!-- table -->
<div class="a" style="left:275px;top:487px;width:479px;height:69px;background:#fff;border:1px solid #857f6c"></div>
<div class="a" style="left:276px;top:488px;width:28px;height:15px;background:#bab3a6;border-right:1px solid #9a9484;border-bottom:1px solid #9a9484"></div>
<div class="a" style="left:304px;top:488px;width:449px;height:15px;background:#dcd5c9;border-bottom:1px solid #9a9484"></div>
<div class="a" style="left:436px;top:488px;width:1px;height:32px;background:#9a9484"></div>
<div class="a" style="left:603px;top:488px;width:1px;height:32px;background:#9a9484"></div>
<div class="a" style="left:303px;top:503px;width:1px;height:17px;background:#9a9484"></div>
<div class="a" style="left:276px;top:519px;width:477px;height:1px;background:#9a9484"></div>
<div class="t" style="left:278px;top:489px">N</div>
<div class="t" style="left:305px;top:489px;letter-spacing:.12px">Количество мягких мест</div>
<div class="t" style="left:438px;top:489px">Количество плацкартных мест</div>
<div class="t" style="left:605px;top:489px">Количество купейных мест</div>
<div class="a" style="left:276px;top:503px;width:27px;height:16px;background:#000080"></div>
<div class="t" style="left:276px;top:505px;width:25px;text-align:right;color:#fff">1</div>
<div class="t" style="left:385px;top:505px;width:50px;text-align:right">380</div>
<div class="t" style="left:552px;top:505px;width:50px;text-align:right">680</div>
<div class="t" style="left:702px;top:505px;width:50px;text-align:right">480</div>
<!-- bottom bar -->
<div class="a" style="left:267px;top:614px;width:495px;height:25px;background:#e0d9cd;border-top:1px solid #857f6c"></div>
<div class="t b" style="left:569px;top:620px;letter-spacing:.3px">OK</div>
<div class="a vsep" style="left:593px;top:618px;height:18px"></div>
<div class="t" style="left:601px;top:620px">Записать</div>
<div class="a vsep" style="left:655px;top:618px;height:18px"></div>
<div class="t" style="left:663px;top:620px;letter-spacing:.27px">Закрыть</div>
<div class="a vsep" style="left:713px;top:618px;height:18px"></div>
<div class="t" style="left:720px;top:620px">Печать</div>
<!--W3 Таблица : outer x52..747 y125..391-->
<div class="a" style="left:52px;top:125px;width:696px;height:267px;background:#c9cfe5;border:1px solid #fff;border-right-color:#7f8bb0;border-bottom-color:#7f8bb0"></div>
<div class="a" style="left:55px;top:147px;width:689px;height:241px;background:#fff;border:1px solid #a2a9c4;border-right:none;border-bottom:none"></div>
<!-- title -->
<svg style="left:57px;top:129px" width="16" height="16" viewBox="0 0 16 16"><path d="M1.500 .5H7L10.500 4V12H1.500Z" fill="#fff" stroke="#b4b4b4"/><path d="M7 .5V4H10.500" fill="#f0f0f0" stroke="#b4b4b4"/><rect x="6.500" y="7.500" width="9" height="8" fill="#fff" stroke="#808080"/><path d="M6.500 9.500H15.500M6.500 11.500H15.500M6.500 13.500H15.500M11 7.500V15.500" stroke="#808080" stroke-width="1"/><text x="-.5" y="14" font-family="Liberation Serif" font-weight="bold" font-size="13" fill="#000090">A</text></svg>
<div class="t b" style="left:78px;top:131px;font-size:11px;letter-spacing:.45px">Таблица</div>
<div class="a" style="left:690px;top:141px;width:8px;height:2px;background:#000"></div>
<div class="a" style="left:708px;top:132px;width:11px;height:11px;border:1px solid #000;border-top-width:2px"></div>
<svg style="left:730px;top:133px" width="9" height="9" viewBox="0 0 9 9"><path d="M.7 .7L8.300 8.300M8.300 .7L.7 8.300" stroke="#000" stroke-width="2"/></svg>
<!-- scrollbars -->
<div class="a" style="left:730px;top:148px;width:14px;height:227px;background:#fdf6ea;border-left:1px solid #f1ebdd"></div>
<div class="a" style="left:56px;top:374px;width:675px;height:14px;background:#fdf6ea;border-top:1px solid #f1ebdd"></div>
<div class="a" style="left:731px;top:375px;width:13px;height:13px;background:#c9c2b4"></div>
<div class="a sbtn" style="left:732px;top:149px;width:11px;height:11px"></div>
<div class="a sbtn" style="left:732px;top:363px;width:11px;height:11px"></div>
<div class="a sbtn" style="left:57px;top:376px;width:11px;height:11px"></div>
<div class="a sbtn" style="left:719px;top:376px;width:11px;height:11px"></div>
<div class="a sbtn" style="left:732px;top:161px;width:11px;height:137px"></div>
<div class="a sbtn" style="left:87px;top:376px;width:564px;height:11px"></div>
<svg style="left:734px;top:152px" width="7" height="5" viewBox="0 0 7 5"><path d="M.3 4.500L3.500 1L6.700 4.500" fill="none" stroke="#000" stroke-width="1.100"/></svg>
<svg style="left:734px;top:366px" width="7" height="5" viewBox="0 0 7 5"><path d="M.3 .5L3.500 4L6.700 .5" fill="none" stroke="#000" stroke-width="1.100"/></svg>
<svg style="left:60px;top:378px" width="5" height="7" viewBox="0 0 5 7"><path d="M4.500 .3L1 3.500L4.500 6.700" fill="none" stroke="#000" stroke-width="1.100"/></svg>
<svg style="left:722px;top:378px" width="5" height="7" viewBox="0 0 5 7"><path d="M.5 .3L4 3.500L.5 6.700" fill="none" stroke="#000" stroke-width="1.100"/></svg>
<!-- document -->
<div class="t b" style="left:104px;top:149px;font-size:21.5px;line-height:24px;height:24px;letter-spacing:-.4px">Места</div>
<div class="t" style="left:101px;top:192px">Код</div>
<div class="t" style="left:100px;top:207px;letter-spacing:-.1px">Номер поезда</div>
<div class="t" style="left:101px;top:222px;letter-spacing:.24px">Количество вагонов</div>
<div class="t" style="left:392px;top:192px">1</div>
<div class="t" style="left:252px;top:207px">323</div>
<div class="t" style="left:252px;top:222px">26</div>
<div class="a" style="left:98px;top:250px;width:601px;height:31px;border:1px solid #000"></div>
<div class="a" style="left:98px;top:265px;width:601px;height:1px;background:#000"></div>
<div class="a" style="left:281px;top:250px;width:1px;height:31px;background:#000"></div>
<div class="a" style="left:489px;top:250px;width:1px;height:31px;background:#000"></div>
<div class="t b" style="left:99px;top:252px;width:182px;text-align:center;letter-spacing:.12px">Количество мягких мест</div>
<div class="t b" style="left:282px;top:252px;width:207px;text-align:center;letter-spacing:.11px">Количество плацкартных мест</div>
<div class="t b" style="left:490px;top:252px;width:208px;text-align:center;letter-spacing:.17px">Количество купейных мест</div>
<div class="t" style="left:99px;top:267px;width:182px;text-align:center">380</div>
<div class="t" style="left:282px;top:267px;width:207px;text-align:center">680</div>
<div class="t" style="left:490px;top:267px;width:208px;text-align:center">480</div>

<!-- TASKBAR + STATUS -->
<!--BOTTOM-->
<div class="a" style="left:0;top:695px;width:1024px;height:43px;background:#dfd8cc;border-top:1px solid #d9d2c5"></div>
<!-- window tabs -->
<div class="a" style="left:1px;top:696px;width:172px;height:20px;background:#f0f0f0;border:1px solid #8a8373;box-shadow:inset 0 0 0 1px #fff"></div>
<div class="a" style="left:174px;top:696px;width:172px;height:20px;background:#f0f0f0;border:1px solid #8a8373;box-shadow:inset 0 0 0 1px #fff"></div>
<div class="a" style="left:347px;top:696px;width:172px;height:20px;background:#c9cfe5;border:1px solid #8a8373;box-shadow:inset 0 0 0 1px #dfe3f2"></div>
<div class="t" style="left:21px;top:700px;color:#8c8c8c">Справочник Места</div>
<div class="t" style="left:193px;top:700px;color:#8c8c8c;letter-spacing:.1px">Места</div>
<div class="t" style="left:366px;top:700px;letter-spacing:.2px">Таблица</div>
<svg style="left:3px;top:697px" width="17" height="17" viewBox="0 0 17 17"><path d="M3 2.500L6 1H16V11L13 13.500V2.500Z" fill="#8c8c48"/><path d="M3 2.500L6 1H16L13 2.500Z" fill="#c6c68c"/><rect x="3" y="2.500" width="10" height="10" fill="#a4a462"/><path d="M13 2.500L16 1V11L13 13.500Z" fill="#72722e"/><rect x="4" y="3" width="6" height="1" fill="#ffd020"/><rect x="4" y="3" width="1" height="1" fill="#fffbd0"/><rect x="8" y="3" width="2" height="1" fill="#f0a060"/><rect x="5" y="4.500" width="5" height="1" fill="#6c6c30"/><rect x="4" y="7" width="9" height="1" fill="#181828"/><rect x="8" y="7" width="3" height="1" fill="#ff6a00"/><path d="M12 8H13V10L16 8V11L12.500 14.500L11 15V12H12Z" fill="#0c0c0c"/><path d="M2.500 8H11V12H1Z" fill="#fff"/><rect x="6" y="9" width="3" height="1" fill="#50c030"/><rect x="0" y="12" width="11" height="4" fill="#a0a05c"/><rect x="0" y="12" width="11" height="1" fill="#bcbc80"/><rect x="2.500" y="12" width="4" height="1" fill="#ffd020"/><rect x="3" y="13.500" width="5" height="1" fill="#6c6c30"/></svg>
<svg style="left:177px;top:700px" width="15" height="12" viewBox="0 0 15 12" shape-rendering="crispEdges"><path d="M0 0H5L7 2H14V12H0Z" fill="#a4a432"/><rect x="1" y="3" width="12" height="8" fill="#dedea6"/><path d="M5 0L7 2" stroke="#303010" shape-rendering="auto"/><g fill="#8c8ca4"><rect x="6" y="4" width="5" height="1"/><rect x="8" y="5" width="3" height="1"/><rect x="2" y="7" width="9" height="1"/><rect x="2" y="9" width="3" height="1"/><rect x="7" y="9" width="4" height="1"/></g></svg>
<svg style="left:350px;top:698px" width="16" height="16" viewBox="0 0 16 16"><path d="M1.500 .5H7L10.500 4V12H1.500Z" fill="#fff" stroke="#b4b4b4"/><path d="M7 .5V4H10.500" fill="#f0f0f0" stroke="#b4b4b4"/><rect x="6.500" y="7.500" width="9" height="8" fill="#fff" stroke="#808080"/><path d="M6.500 9.500H15.500M6.500 11.500H15.500M6.500 13.500H15.500M11 7.500V15.500" stroke="#808080" stroke-width="1"/><text x="-.5" y="14" font-family="Liberation Serif" font-weight="bold" font-size="13" fill="#000090">A</text></svg>
<!-- status bar -->
<div class="a" style="left:0;top:718px;width:950px;height:19px;border:1px solid #cdc6b8;border-left:none"></div>
<div class="a" style="left:956px;top:718px;width:29px;height:19px;border:1px solid #cdc6b8"></div>
<div class="a" style="left:990px;top:718px;width:33px;height:19px;border:1px solid #cdc6b8"></div>
<div class="t" style="left:959px;top:721px;color:#8c8c8c">CAP</div>
<div class="t" style="left:993px;top:721px">NUM</div>
<!-- OS taskbar sliver -->
<div class="a" style="left:0;top:738px;width:1024px;height:4px;background:#8a8a8a;border-top:1px solid #4a4a4a"></div>
<div class="a" style="left:217px;top:740px;width:103px;height:3px;background:#e6e6e6;border:1px solid #3c3c3c;border-bottom:none;border-radius:2px 2px 0 0"></div>
<div class="a" style="left:325px;top:740px;width:103px;height:3px;background:#1c1c1c;border:1px solid #3c3c3c;border-bottom:none;border-radius:2px 2px 0 0"></div>
<div class="a" style="left:433px;top:740px;width:103px;height:3px;background:#e6e6e6;border:1px solid #3c3c3c;border-bottom:none;border-radius:2px 2px 0 0"></div>
<div class="a" style="left:541px;top:740px;width:103px;height:3px;background:#e6e6e6;border:1px solid #3c3c3c;border-bottom:none;border-radius:2px 2px 0 0"></div>
<div class="a" style="left:649px;top:740px;width:104px;height:3px;background:#e6e6e6;border:1px solid #3c3c3c;border-bottom:none;border-radius:2px 2px 0 0"></div>
<div class="a" style="left:15px;top:738px;width:29px;height:29px;border-radius:50%;background:#b4cfe2;border:1px solid #1c2c3c"></div>

</body>
</html>
